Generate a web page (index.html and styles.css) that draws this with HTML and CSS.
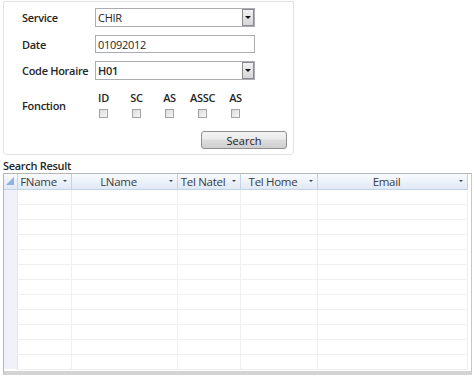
FILE: index.html
```html
<!DOCTYPE html>
<html lang="en">
<head>
    <meta charset="UTF-8">
    <title>Recherche personnel</title>
    <link rel="stylesheet" href="styles.css">
</head>
<body>

    <!-- Search form -->
    <div class="panel">
        <div class="form">
            <label class="field-label">Service</label>
            <div class="combo">
                <span class="combo-value">CHIR</span>
                <span class="combo-button"><span class="arrow"></span></span>
            </div>

            <label class="field-label">Date</label>
            <div class="textbox">01092012</div>

            <label class="field-label">Code Horaire</label>
            <div class="combo">
                <span class="combo-value strong">H01</span>
                <span class="combo-button"><span class="arrow"></span></span>
            </div>

            <label class="field-label low">Fonction</label>
            <div class="checks">
                <div class="check"><span>ID</span><span class="box"></span></div>
                <div class="check"><span>SC</span><span class="box"></span></div>
                <div class="check"><span>AS</span><span class="box"></span></div>
                <div class="check"><span>ASSC</span><span class="box"></span></div>
                <div class="check"><span>AS</span><span class="box"></span></div>
            </div>
        </div>
        <div class="actions">
            <button class="search-button">Search</button>
        </div>
    </div>

    <!-- Results -->
    <div class="section-title">Search Result</div>
    <div class="grid">
        <table>
            <colgroup>
                <col class="col-rowhead">
                <col class="col-fname">
                <col class="col-lname">
                <col class="col-natel">
                <col class="col-home">
                <col class="col-email">
            </colgroup>
            <thead>
                <tr>
                    <th class="corner">
                        <svg width="10" height="10" viewBox="0 0 10 10"><path d="M9 1 L9 9 L1 9 Z" fill="#8fb0e0"/></svg>
                    </th>
                    <th><div class="head"><span>FName</span><i class="drop"></i></div></th>
                    <th><div class="head"><span>LName</span><i class="drop"></i></div></th>
                    <th><div class="head"><span>Tel Natel</span><i class="drop"></i></div></th>
                    <th><div class="head"><span>Tel Home</span><i class="drop"></i></div></th>
                    <th><div class="head"><span>Email</span><i class="drop"></i></div></th>
                </tr>
            </thead>
            <tbody id="rows"></tbody>
        </table>
    </div>

    <script>
        // Empty rows of the result grid
        const rows = document.getElementById('rows');
        for (let i = 0; i < 12; i++) {
            const tr = document.createElement('tr');
            tr.innerHTML = '<td class="rowhead"></td><td></td><td></td><td></td><td></td><td></td>';
            rows.appendChild(tr);
        }
    </script>

</body>
</html>
```

FILE: styles.css
```css
/* Reset styles */
* {
    margin: 0;
    padding: 0;
    box-sizing: border-box;
}

body {
    font-family: 'Open Sans', 'Noto Sans', sans-serif;
    font-size: 11px;
    letter-spacing: -0.3px;
    color: #262626;
    background: #fff;
    width: 474px;
    height: 377px;
    overflow: hidden;
}

/* Form panel */
.panel {
    margin: 1px 0 0 3px;
    width: 291px;
    height: 154px;
    border: 1px solid #e2e2e2;
    border-radius: 0 0 4px 4px;
    padding: 6px 6px 0 18px;
}

.form {
    display: grid;
    grid-template-columns: 73px 160px;
    row-gap: 8px;
    align-items: center;
}

.field-label {
    font-weight: 600;
    font-size: 11px;
    white-space: nowrap;
}

.low {
    margin-top: 5px;
}

.combo,
.textbox {
    height: 19px;
    border: 1px solid #abadb3;
    background: #fff;
    display: flex;
    align-items: center;
}

.textbox {
    height: 18px;
    padding-left: 2px;
}

.combo-value {
    flex: 1;
    padding-left: 2px;
}

.strong {
    font-weight: 600;
}

.combo-button {
    width: 12px;
    height: 17px;
    border: 1px solid #8b8b8b;
    background: linear-gradient(to bottom, #f2f2f2, #d6d6d6);
    display: flex;
    align-items: center;
    justify-content: center;
}

.arrow {
    width: 0;
    height: 0;
    border-left: 3px solid transparent;
    border-right: 3px solid transparent;
    border-top: 3px solid #111;
}

.checks {
    display: flex;
    margin-left: -8px;
    padding-top: 2px;
}

.check {
    width: 33px;
    display: flex;
    flex-direction: column;
    align-items: center;
    gap: 4px;
    font-weight: 600;
}

.box {
    width: 9px;
    height: 9px;
    border: 1px solid #a4a4a4;
    background: linear-gradient(to bottom right, #dcdcdc, #f6f6f6);
}

.actions {
    display: flex;
    justify-content: flex-end;
    margin-top: 13px;
}

.search-button {
    width: 86px;
    height: 18px;
    font-family: inherit;
    font-size: 11px;
    color: #222;
    border: 1px solid #8e8f8f;
    border-radius: 3px;
    background: linear-gradient(to bottom, #f3f3f3 0%, #ebebeb 45%, #dddddd 50%, #cfcfcf 100%);
}

/* Result grid */
.section-title {
    margin: 4px 0 0 3px;
    font-weight: 600;
    height: 14px;
    line-height: 14px;
}

.grid {
    margin: 0 0 0 3px;
    width: 469px;
    height: 202px;
    border: 1px solid #b5b5b5;
    border-bottom: 4px solid #d4d4d4;
    border-right: 1px solid #c8c8c8;
    overflow: hidden;
    padding-right: 4px;
}

table {
    border-collapse: collapse;
    table-layout: fixed;
    width: 463px;
}

.col-rowhead { width: 13px; }
.col-fname { width: 54px; }
.col-lname { width: 106px; }
.col-natel { width: 63px; }
.col-home { width: 77px; }
.col-email { width: 150px; }

th {
    height: 15px;
    font-weight: normal;
    font-size: 11.5px;
    color: #3b3b3b;
    background: linear-gradient(to bottom, #f9fbfe, #dfe8f5);
    border-right: 1px solid #c5d2e4;
    border-bottom: 1px solid #c5d2e4;
    padding: 0;
}

.head {
    display: flex;
    align-items: center;
    height: 14px;
}

.head span {
    flex: 1;
    text-align: center;
    white-space: nowrap;
}

.drop {
    width: 11px;
    display: flex;
    justify-content: center;
}

.drop::before {
    content: "";
    border-left: 2px solid transparent;
    border-right: 2px solid transparent;
    border-top: 2px solid #444;
}

.corner {
    text-align: left;
    vertical-align: middle;
}

.corner svg {
    display: block;
    margin-left: 1px;
}

td {
    height: 15px;
    border-right: 1px solid #f0f0f0;
    border-bottom: 1px solid #f0f0f0;
}

.rowhead {
    background: #f0f1fb;
    border-right: 1px solid #e4e6f2;
    border-bottom: none;
}
```
